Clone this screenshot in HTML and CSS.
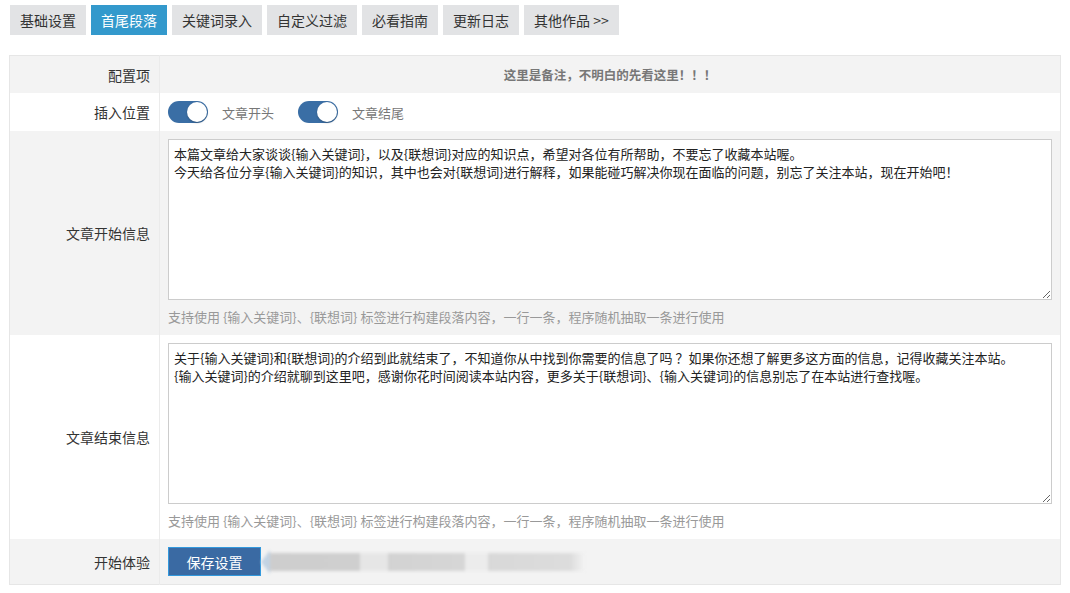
FILE: index.html
```html
<!DOCTYPE html>
<html lang="zh-CN">
<head>
    <meta charset="UTF-8">
    <title>首尾段落</title>
    <link rel="stylesheet" href="styles.css">
</head>
<body>
    <div class="page">
        <ul class="tabs">
            <li>基础设置</li>
            <li class="active">首尾段落</li>
            <li>关键词录入</li>
            <li>自定义过滤</li>
            <li>必看指南</li>
            <li>更新日志</li>
            <li>其他作品 &gt;&gt;</li>
        </ul>

        <table class="form-table">
            <tr class="head">
                <th>配置项</th>
                <td class="note">这里是备注，不明白的先看这里！！！</td>
            </tr>
            <tr>
                <th>插入位置</th>
                <td>
                    <div class="switches">
                        <label class="switch"><span class="track"><span class="knob"></span></span>文章开头</label>
                        <label class="switch"><span class="track"><span class="knob"></span></span>文章结尾</label>
                    </div>
                </td>
            </tr>
            <tr class="stripe">
                <th>文章开始信息</th>
                <td class="area-cell">
                    <textarea>本篇文章给大家谈谈{输入关键词}，以及{联想词}对应的知识点，希望对各位有所帮助，不要忘了收藏本站喔。
今天给各位分享{输入关键词}的知识，其中也会对{联想词}进行解释，如果能碰巧解决你现在面临的问题，别忘了关注本站，现在开始吧！</textarea>
                    <p class="hint">支持使用 {输入关键词}、{联想词} 标签进行构建段落内容，一行一条，程序随机抽取一条进行使用</p>
                </td>
            </tr>
            <tr>
                <th>文章结束信息</th>
                <td class="area-cell">
                    <textarea>关于{输入关键词}和{联想词}的介绍到此就结束了，不知道你从中找到你需要的信息了吗 ？如果你还想了解更多这方面的信息，记得收藏关注本站。
{输入关键词}的介绍就聊到这里吧，感谢你花时间阅读本站内容，更多关于{联想词}、{输入关键词}的信息别忘了在本站进行查找喔。</textarea>
                    <p class="hint">支持使用 {输入关键词}、{联想词} 标签进行构建段落内容，一行一条，程序随机抽取一条进行使用</p>
                </td>
            </tr>
            <tr class="stripe">
                <th>开始体验</th>
                <td>
                    <div class="actions">
                        <button class="btn">保存设置</button>
                        <div class="tip">
                            <span class="tip-arrow"></span>
                            <span class="tip-body"></span>
                        </div>
                    </div>
                </td>
            </tr>
        </table>
    </div>
</body>
</html>
```

FILE: styles.css
```css
body {
    margin: 0;
    background: #fff;
    font-family: "Noto Sans CJK SC", "Liberation Sans", sans-serif;
    color: #333;
}
.page {
    padding: 5px 9px;
}
.tabs {
    list-style: none;
    margin: 0 0 20px 1px;
    padding: 0;
    display: flex;
    gap: 5px;
}
.tabs li {
    height: 30px;
    line-height: 30px;
    padding: 0 10px;
    font-size: 14px;
    background: #e2e3e5;
    color: #333;
}
.tabs li.active {
    background: #3399cc;
    color: #fff;
}
.form-table {
    width: 100%;
    border-collapse: collapse;
    border: 1px solid #e6e6e6;
}
.form-table th {
    width: 140px;
    padding: 0 9px 0 0;
    text-align: right;
    font-size: 14px;
    font-weight: normal;
    color: #333;
    border-right: 1px solid #ebebeb;
}
.form-table td {
    padding: 0 8px 0 8px;
}
.form-table tr.head,
.form-table tr.stripe {
    background: #f3f3f3;
}
.form-table tr.head th,
.form-table tr.head td {
    height: 37px;
}
.note {
    text-align: center;
    font-size: 12.5px;
    font-weight: bold;
    color: #777;
}
.switches {
    display: flex;
    gap: 14px;
    height: 38px;
    align-items: center;
}
.switch {
    display: flex;
    align-items: center;
    gap: 14px;
    font-size: 13px;
    color: #777;
    margin-right: 10px;
}
.track {
    display: flex;
    justify-content: flex-end;
    align-items: center;
    width: 40px;
    height: 22px;
    border-radius: 11px;
    background: #3a6ea5;
    box-sizing: border-box;
    padding: 1px;
}
.knob {
    width: 20px;
    height: 20px;
    border-radius: 50%;
    background: #fff;
    box-shadow: 0 1px 2px rgba(0, 0, 0, 0.25);
}
.area-cell {
    padding-top: 8px !important;
    padding-bottom: 9px !important;
}
textarea {
    display: block;
    width: 100%;
    height: 161px;
    box-sizing: border-box;
    margin: 0;
    padding: 5px;
    border: 1px solid #cccccc;
    font-family: "Noto Sans CJK SC", "Liberation Sans", sans-serif;
    font-size: 13px;
    line-height: 18px;
    color: #222;
    resize: vertical;
    background: #fff;
}
.hint {
    margin: 8px 0 0;
    font-size: 13px;
    line-height: 18px;
    color: #999;
}
.actions {
    display: flex;
    align-items: center;
    height: 45px;
}
.btn {
    width: 93px;
    height: 29px;
    padding: 0;
    border: 1px solid #3399dd;
    background: #3a6aa3;
    color: #fff;
    font-family: "Noto Sans CJK SC", "Liberation Sans", sans-serif;
    font-size: 14px;
}
.tip {
    display: flex;
    align-items: center;
    filter: blur(1.5px);
}
.tip-arrow {
    width: 0;
    height: 0;
    border-top: 12px solid transparent;
    border-bottom: 12px solid transparent;
    border-right: 9px solid #c3d3e3;
}
.tip-body {
    width: 315px;
    height: 18px;
    background: linear-gradient(90deg,
        #cdcdcd 0, #cfcfcf 90px, #e6e6e6 90px, #e6e6e6 118px,
        #d2d2d2 118px, #d6d6d6 195px, #ececec 195px, #ececec 218px,
        #d8d8d8 218px, #dcdcdc 300px, #f3f3f3 315px);
}
```
